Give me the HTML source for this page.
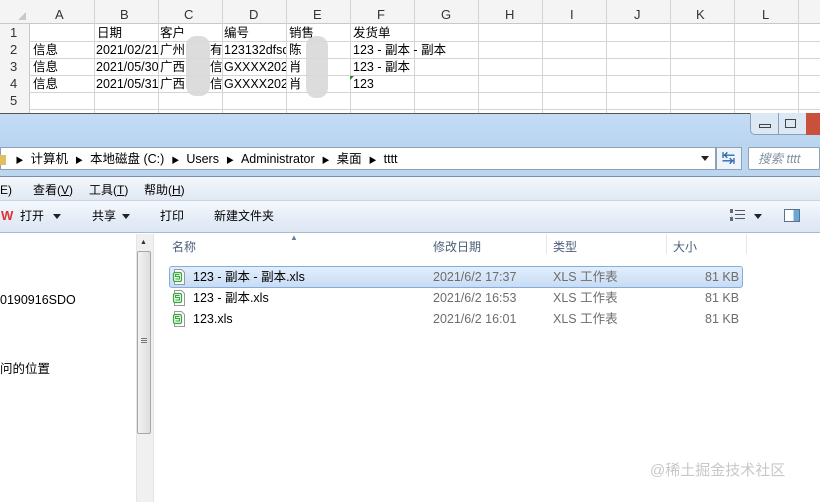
<!DOCTYPE html>
<html><head><meta charset="utf-8"><style>
*{margin:0;padding:0;box-sizing:border-box}
body{width:820px;height:502px;overflow:hidden;background:#fff;position:relative;font-family:"Liberation Sans","Noto Sans CJK SC",sans-serif;font-size:12px;color:#000;line-height:16px}
.a{position:absolute;white-space:nowrap;line-height:16px}
.g{position:absolute;background:#d4d4d4}
</style></head><body>
<div class="a" style="left:0;top:0;width:820px;height:113px;background:#fff"></div>
<div class="a" style="left:0;top:0;width:820px;height:24px;background:#f4f4f4;border-bottom:1px solid #c8c8c8"></div>
<div class="a" style="left:0;top:24px;width:30px;height:90px;background:#f4f4f4;border-right:1px solid #c8c8c8"></div>
<div class="a" style="left:18px;top:12px;width:0;height:0;border-left:8px solid transparent;border-bottom:8px solid #c8c8c8"></div>
<div id="cols"></div>
<div class="g" style="left:30px;top:41px;width:790px;height:1px"></div>
<div class="g" style="left:30px;top:58px;width:790px;height:1px"></div>
<div class="g" style="left:30px;top:75px;width:790px;height:1px"></div>
<div class="g" style="left:30px;top:92px;width:790px;height:1px"></div>
<div class="g" style="left:30px;top:109px;width:790px;height:1px"></div>
<div style="font-size:13px;color:#333">
<div class="a" style="left:55px;top:7px">A</div><div class="a" style="left:120px;top:7px">B</div><div class="a" style="left:184px;top:7px">C</div><div class="a" style="left:249px;top:7px">D</div><div class="a" style="left:313px;top:7px">E</div><div class="a" style="left:377px;top:7px">F</div><div class="a" style="left:441px;top:7px">G</div><div class="a" style="left:505px;top:7px">H</div><div class="a" style="left:570px;top:7px">I</div><div class="a" style="left:634px;top:7px">J</div><div class="a" style="left:696px;top:7px">K</div><div class="a" style="left:762px;top:7px">L</div>
<div class="a" style="left:10px;top:25px">1</div><div class="a" style="left:10px;top:42px">2</div><div class="a" style="left:10px;top:59px">3</div><div class="a" style="left:10px;top:76px">4</div><div class="a" style="left:10px;top:93px">5</div>
</div>
<div style="font-size:12.5px">
<div class="a" style="left:97px;top:25px">日期</div><div class="a" style="left:160px;top:25px">客户</div><div class="a" style="left:224px;top:25px">编号</div><div class="a" style="left:289px;top:25px">销售</div><div class="a" style="left:353px;top:25px">发货单</div>
<div class="a" style="left:33px;top:42px">信息</div><div class="a" style="left:96px;top:42px;width:62px;overflow:hidden">2021/02/21</div><div class="a" style="left:160px;top:42px;width:62px;overflow:hidden">广州　　有</div><div class="a" style="left:224px;top:42px;width:62px;overflow:hidden">123132dfsd</div><div class="a" style="left:289px;top:42px">陈</div><div class="a" style="left:353px;top:42px">123 - 副本 - 副本</div>
<div class="a" style="left:33px;top:59px">信息</div><div class="a" style="left:96px;top:59px;width:62px;overflow:hidden">2021/05/30</div><div class="a" style="left:160px;top:59px;width:62px;overflow:hidden">广西　　信</div><div class="a" style="left:224px;top:59px;width:62px;overflow:hidden">GXXXX2021</div><div class="a" style="left:289px;top:59px">肖</div><div class="a" style="left:353px;top:59px">123 - 副本</div>
<div class="a" style="left:33px;top:76px">信息</div><div class="a" style="left:96px;top:76px;width:62px;overflow:hidden">2021/05/31</div><div class="a" style="left:160px;top:76px;width:62px;overflow:hidden">广西　　信</div><div class="a" style="left:224px;top:76px;width:62px;overflow:hidden">GXXXX2021</div><div class="a" style="left:289px;top:76px">肖</div><div class="a" style="left:353px;top:76px">123</div>
</div>
<div class="a" style="left:350px;top:76px;width:0;height:0;border-top:4px solid #1a8a2a;border-right:4px solid transparent"></div>
<div class="a" style="left:186px;top:36px;width:24px;height:60px;background:#d8d8d8;border-radius:10px;opacity:.9"></div>
<div class="a" style="left:306px;top:36px;width:22px;height:62px;background:#d8d8d8;border-radius:10px;opacity:.9"></div>
<!-- Title bar -->
<div class="a" style="left:0;top:113px;width:820px;height:34px;background:linear-gradient(#c4dcf4,#b8d4f0);border-top:1px solid #555"></div>
<div class="a" style="left:750px;top:113px;width:70px;height:22px;background:#dce8f4;border:1px solid #8aa0b8;border-top:none;border-radius:0 0 0 5px"></div>
<div class="a" style="left:778px;top:113px;width:1px;height:22px;background:#8aa0b8"></div>
<div class="a" style="left:806px;top:113px;width:14px;height:22px;background:#c9503a"></div>
<div class="a" style="left:759px;top:124px;width:12px;height:4px;border:1px solid #444"></div>
<div class="a" style="left:785px;top:119px;width:11px;height:9px;border:1px solid #444"></div>
<!-- Address bar -->
<div class="a" style="left:0;top:146px;width:820px;height:30px;background:#bcd6f0"></div>
<div class="a" style="left:0;top:147px;width:716px;height:23px;background:#fff;border:1px solid #8da2b8"></div>
<div class="a" style="left:716px;top:147px;width:26px;height:23px;background:#eef4fa;border:1px solid #8da2b8"></div>
<div class="a" style="left:748px;top:147px;width:72px;height:23px;background:#fff;border:1px solid #8da2b8;border-radius:2px"></div>
<div class="a" style="left:758px;top:151px;font-style:italic;color:#8090a0;font-size:12.5px">搜索 tttt</div>
<div class="a" style="left:722px;top:151px;color:#2a6ab0;font-size:13px;font-weight:bold">↹</div>
<div class="a" style="left:701px;top:156px;width:0;height:0;border-left:4px solid transparent;border-right:4px solid transparent;border-top:5px solid #222"></div>
<div class="a" style="left:0;top:151px;font-size:12.5px;color:#000">
<span style="display:inline-block;width:6px;height:10px;background:#e0c060;vertical-align:middle"></span>
<span style="font-size:8px;margin:0 7px 0 6px">▶</span>计算机<span style="font-size:8px;margin:0 7px">▶</span>本地磁盘 (C:)<span style="font-size:8px;margin:0 7px">▶</span>Users<span style="font-size:8px;margin:0 7px">▶</span>Administrator<span style="font-size:8px;margin:0 7px">▶</span>桌面<span style="font-size:8px;margin:0 7px">▶</span>tttt</div>
<!-- Menu bar -->
<div class="a" style="left:0;top:176px;width:820px;height:25px;background:linear-gradient(#f4f8fc,#e0e8f2);border-top:1px solid #7a8ea4;border-bottom:1px solid #c8d4e2"></div>
<div class="a" style="left:0;top:182px">E)</div>
<div class="a" style="left:33px;top:182px">查看(<u>V</u>)</div>
<div class="a" style="left:89px;top:182px">工具(<u>T</u>)</div>
<div class="a" style="left:144px;top:182px">帮助(<u>H</u>)</div>
<!-- Toolbar -->
<div class="a" style="left:0;top:201px;width:820px;height:32px;background:linear-gradient(#f6f9fd,#e6eef8 50%,#dce6f2);border-bottom:1px solid #a8bace"></div>
<div class="a" style="left:1px;top:208px;color:#e03030;font-weight:bold;font-size:13px">W</div>
<div class="a" style="left:20px;top:208px">打开</div>
<div class="a" style="left:53px;top:214px;border-left:4px solid transparent;border-right:4px solid transparent;border-top:5px solid #222"></div>
<div class="a" style="left:92px;top:208px">共享</div>
<div class="a" style="left:122px;top:214px;border-left:4px solid transparent;border-right:4px solid transparent;border-top:5px solid #222"></div>
<div class="a" style="left:160px;top:208px">打印</div>
<div class="a" style="left:214px;top:208px">新建文件夹</div>
<div class="a" style="left:730px;top:209px;width:14px;height:12px;border-left:3px dotted #667"></div>
<div class="a" style="left:735px;top:210px;width:10px;height:10px;background:repeating-linear-gradient(#556 0 1px,transparent 1px 4px)"></div>
<div class="a" style="left:754px;top:214px;border-left:4px solid transparent;border-right:4px solid transparent;border-top:5px solid #222"></div>
<div class="a" style="left:784px;top:209px;width:16px;height:13px;border:1px solid #5a7290;background:linear-gradient(90deg,#fff 60%,#6aa8d8 60%)"></div>
<!-- Nav pane -->
<div class="a" style="left:0;top:234px;width:136px;height:268px;background:#fff"></div>
<div class="a" style="left:0;top:292px;font-size:12.5px">0190916SDO</div>
<div class="a" style="left:0;top:361px;font-size:12.5px">问的位置</div>
<div class="a" style="left:136px;top:234px;width:17px;height:268px;background:#f0f0f0;border-left:1px solid #e4e4e4"></div>
<div class="a" style="left:140px;top:235px;font-size:7px;color:#333">▲</div>
<div class="a" style="left:137px;top:251px;width:14px;height:183px;background:linear-gradient(90deg,#f2f2f2,#dedede);border:1px solid #a8a8a8;border-radius:2px"></div>
<div class="a" style="left:141px;top:338px;width:6px;height:5px;background:repeating-linear-gradient(#777 0 1px,transparent 1px 2px)"></div>
<div class="a" style="left:153px;top:234px;width:1px;height:268px;background:#dde4ec"></div>
<!-- Content -->
<div class="a" style="left:154px;top:234px;width:666px;height:268px;background:#fff"></div>
<div class="a" style="left:290px;top:230px;font-size:8px;color:#6080a0">▲</div>
<div class="a" style="left:172px;top:239px;color:#4c607a">名称</div>
<div class="a" style="left:433px;top:239px;color:#4c607a">修改日期</div>
<div class="a" style="left:553px;top:239px;color:#4c607a">类型</div>
<div class="a" style="left:673px;top:239px;color:#4c607a">大小</div>
<div class="a" style="left:546px;top:234px;width:1px;height:20px;background:#e4e8ee"></div>
<div class="a" style="left:666px;top:234px;width:1px;height:20px;background:#e4e8ee"></div>
<div class="a" style="left:746px;top:234px;width:1px;height:20px;background:#e4e8ee"></div>
<div class="a" style="left:169px;top:266px;width:574px;height:22px;background:linear-gradient(#e2eefc,#c8dcf4);border:1px solid #84acdd;border-radius:3px"></div>
<div style="font-size:12.5px">
<div class="a" style="left:193px;top:269px">123 - 副本 - 副本.xls</div>
<div class="a" style="left:193px;top:290px">123 - 副本.xls</div>
<div class="a" style="left:193px;top:311px">123.xls</div>
</div>
<div style="color:#6d6d6d;font-size:12.5px">
<div class="a" style="left:433px;top:269px">2021/6/2 17:37</div><div class="a" style="left:553px;top:269px">XLS 工作表</div><div class="a" style="left:705px;top:269px">81 KB</div>
<div class="a" style="left:433px;top:290px">2021/6/2 16:53</div><div class="a" style="left:553px;top:290px">XLS 工作表</div><div class="a" style="left:705px;top:290px">81 KB</div>
<div class="a" style="left:433px;top:311px">2021/6/2 16:01</div><div class="a" style="left:553px;top:311px">XLS 工作表</div><div class="a" style="left:705px;top:311px">81 KB</div>
</div>
<svg class="a" style="left:172px;top:269px" width="14" height="60" viewBox="0 0 14 60">
<g fill="#fff" stroke="#999" stroke-width="1"><path d="M2.5 .5h7l3 3v12h-10z"/><path d="M2.5 21.5h7l3 3v12h-10z"/><path d="M2.5 42.5h7l3 3v12h-10z"/></g>
<g fill="#e8f6e8" stroke="#39a83e" stroke-width="1.2"><rect x="1.5" y="3.5" width="8" height="9" rx="1.5"/><rect x="1.5" y="24.5" width="8" height="9" rx="1.5"/><rect x="1.5" y="45.5" width="8" height="9" rx="1.5"/></g>
<g stroke="#39a83e" stroke-width="1" fill="none"><path d="M7.5 5.5h-4v2h4v2.5h-4M7.5 26.5h-4v2h4v2.5h-4M7.5 47.5h-4v2h4v2.5h-4"/></g>
</svg>
<div class="a" style="left:650px;top:463px;font-size:15px;color:#c8c8c8">@稀土掘金技术社区</div>
<script>
var c=document.getElementById('cols');
for(var x=94;x<820;x+=64){var d=document.createElement('div');d.className='g';d.style.cssText='left:'+x+'px;top:0;width:1px;height:113px';c.appendChild(d);}
</script>
</body></html>
